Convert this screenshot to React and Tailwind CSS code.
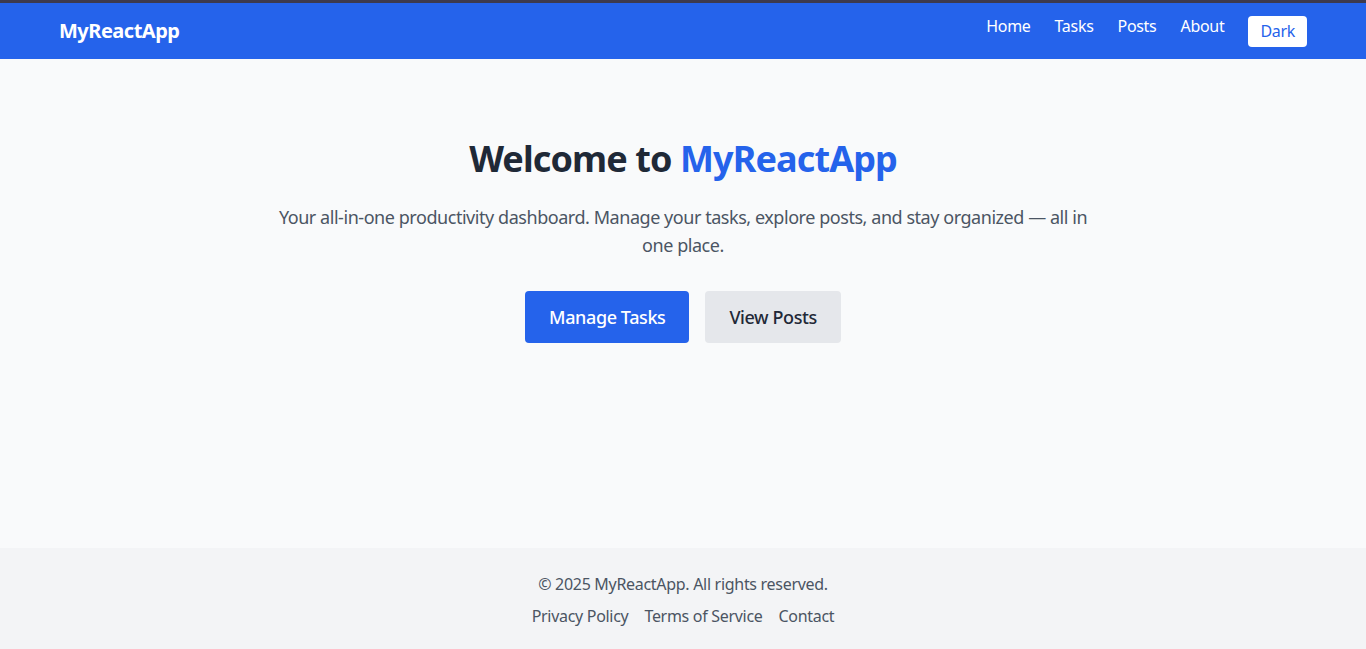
const font = { fontFamily: '"Noto Sans", "Open Sans", sans-serif' };

const Navbar = () => (
  <nav className="bg-[#2563eb] text-white">
    <div className="max-w-7xl mx-auto px-4 h-14 flex items-center justify-between">
      <span className="text-xl font-bold tracking-tight">MyReactApp</span>
      <div className="flex items-center gap-6 text-base tracking-[-0.3px]">
        <a href="#" className="pb-[10px]">Home</a>
        <a href="#" className="pb-[10px]">Tasks</a>
        <a href="#" className="pb-[10px]">Posts</a>
        <a href="#" className="pb-[10px]">About</a>
        <button className="bg-white text-[#2563eb] rounded px-3 h-[31px] text-base">Dark</button>
      </div>
    </div>
  </nav>
);

const Hero = () => (
  <main className="flex-1 bg-[#f9fafb] pt-20 px-4">
    <div className="text-center">
      <h1 className="text-4xl font-bold text-[#1f2937] tracking-tight">
        Welcome to <span className="text-[#2563eb]">MyReactApp</span>
      </h1>
      <p className="mt-6 max-w-[825px] mx-auto text-lg leading-7 text-[#4b5563] tracking-[-0.45px]">
        Your all-in-one productivity dashboard. Manage your tasks, explore posts, and stay organized — all in one place.
      </p>
      <div className="mt-8 flex justify-center gap-4 tracking-[-0.4px]">
        <button className="bg-[#2563eb] text-white text-lg font-medium px-6 py-3 rounded">Manage Tasks</button>
        <button className="bg-[#e5e7eb] text-[#1f2937] text-lg font-medium px-6 py-3 rounded">View Posts</button>
      </div>
    </div>
  </main>
);

const Footer = () => (
  <footer className="bg-[#f3f4f6] h-[101px] pt-6 text-center text-[#4b5563] text-base tracking-[-0.3px]">
    <p>© 2025 MyReactApp. All rights reserved.</p>
    <div className="mt-2 flex justify-center gap-4">
      <a href="#">Privacy Policy</a>
      <a href="#">Terms of Service</a>
      <a href="#">Contact</a>
    </div>
  </footer>
);

export default function App() {
  return (
    <div className="min-h-screen flex flex-col" style={font}>
      <div className="h-[3px] bg-[#3d3a4e]" />
      <Navbar />
      <Hero />
      <Footer />
    </div>
  );
}
